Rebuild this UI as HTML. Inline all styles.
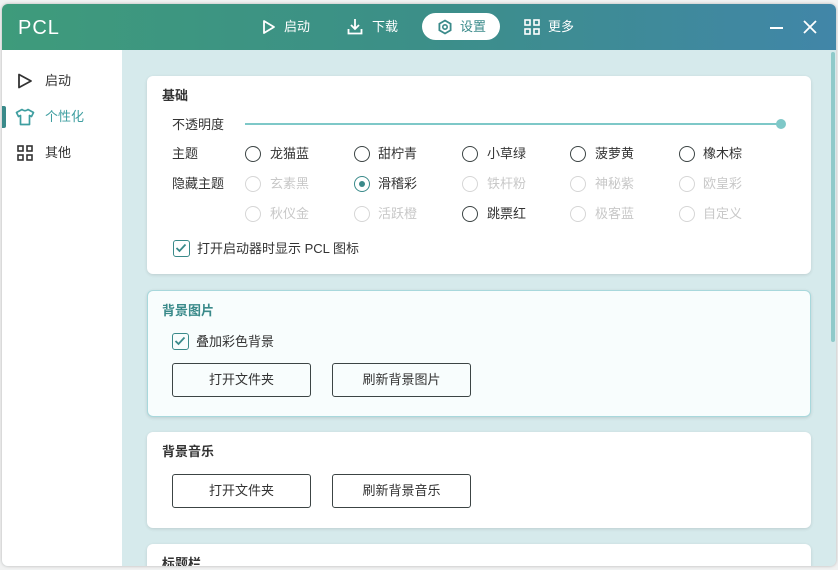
<!DOCTYPE html>
<html><head><meta charset="utf-8"><style>
*{margin:0;padding:0;box-sizing:border-box}
body{width:838px;height:570px;background:#f1f2f2;position:relative;overflow:hidden;font-family:"Liberation Sans","Noto Sans CJK SC",sans-serif;font-size:13px;color:#333}
.win{position:absolute;left:2px;top:4px;width:834px;height:562px;border-radius:6px;overflow:hidden;background:#d6eaec;box-shadow:0 0 3px rgba(0,0,0,.25)}
.hdr{position:absolute;left:0;top:0;width:834px;height:46px;background:linear-gradient(90deg,#3e9b7b,#3c8f88 50%,#4186a8)}
.side{position:absolute;left:0;top:46px;width:120px;height:516px;background:#fff}
.t{position:absolute;white-space:nowrap;line-height:16px}
.card{position:absolute;left:145px;width:664px;background:#fff;border-radius:6px;box-shadow:0 1px 3px rgba(0,0,0,.12)}
.r{position:absolute;width:16px;height:16px;border-radius:50%;border:1.5px solid #3c4444}
.r.d{border-color:#d6d6d6}
.btn{position:absolute;width:139px;height:34px;border:1px solid #3c4444;border-radius:3px;text-align:center;line-height:32px;font-size:13px;color:#333}
.cb{position:absolute;width:17px;height:17px;border:1.5px solid #3a8a8a;border-radius:3px}
</style></head><body>
<div class="win">
<div class="hdr">
<div class="t" style="left:16px;top:13px;font-size:20px;line-height:22px;color:#fff;letter-spacing:1px">PCL</div>
<svg style="position:absolute;left:260px;top:15px" width="14" height="16" viewBox="0 0 14 16"><path d="M2 2 L12 8 L2 14 Z" fill="none" stroke="#fff" stroke-width="1.8" stroke-linejoin="round"/></svg>
<div class="t" style="left:282px;top:15px;color:#fff">启动</div>
<svg style="position:absolute;left:345px;top:14px" width="16" height="17" viewBox="0 0 16 17"><path d="M8 1v10M4 7l4 4 4-4M1.5 11v4.5h13V11" fill="none" stroke="#fff" stroke-width="1.8"/></svg>
<div class="t" style="left:370px;top:15px;color:#fff">下载</div>
<div style="position:absolute;left:420px;top:9px;width:78px;height:27px;border-radius:14px;background:#fff"></div>
<svg style="position:absolute;left:435px;top:15px" width="16" height="16" viewBox="0 0 16 16"><path d="M8 1.5 L13.6 4.75 V11.25 L8 14.5 L2.4 11.25 V4.75 Z" fill="none" stroke="#3a8a8a" stroke-width="1.8"/><circle cx="8" cy="8" r="2.2" fill="none" stroke="#3a8a8a" stroke-width="1.6"/></svg>
<div class="t" style="left:458px;top:15px;color:#3a8a8a">设置</div>
<svg style="position:absolute;left:522px;top:15px" width="16" height="16" viewBox="0 0 16 16"><g fill="none" stroke="#fff" stroke-width="1.6"><rect x="1" y="1" width="5" height="5"/><rect x="10" y="1" width="5" height="5"/><rect x="1" y="10" width="5" height="5"/><rect x="10" y="10" width="5" height="5"/></g></svg>
<div class="t" style="left:546px;top:15px;color:#fff">更多</div>
<div style="position:absolute;left:768px;top:23px;width:13px;height:2px;background:#fff"></div>
<svg style="position:absolute;left:801px;top:16px" width="14" height="14" viewBox="0 0 14 14"><path d="M1 1L13 13M13 1L1 13" stroke="#fff" stroke-width="1.8"/></svg>
</div>
<div class="side">
<svg style="position:absolute;left:15px;top:23px" width="16" height="16" viewBox="0 0 16 16"><path d="M2 1.5 L14 8 L2 14.5 Z" fill="none" stroke="#333" stroke-width="1.8" stroke-linejoin="round"/></svg>
<div class="t" style="left:43px;top:23px">启动</div>
<div style="position:absolute;left:0;top:56px;width:4px;height:22px;background:#3a8a8a;border-radius:0 2px 2px 0"></div>
<svg style="position:absolute;left:13px;top:58px" width="20" height="18" viewBox="0 0 20 18"><path d="M7 1.5 Q10 4 13 1.5 L18.5 4.5 L16.5 8.5 L14.5 7.5 V16.5 H5.5 V7.5 L3.5 8.5 L1.5 4.5 Z" fill="none" stroke="#3e9ea0" stroke-width="1.7" stroke-linejoin="round"/></svg>
<div class="t" style="left:43px;top:59px;color:#3e9ea0">个性化</div>
<svg style="position:absolute;left:15px;top:95px" width="16" height="16" viewBox="0 0 16 16"><g fill="none" stroke="#333" stroke-width="1.6"><rect x="1" y="1" width="5" height="5"/><rect x="10" y="1" width="5" height="5"/><rect x="1" y="10" width="5" height="5"/><rect x="10" y="10" width="5" height="5"/></g></svg>
<div class="t" style="left:43px;top:95px">其他</div>
</div>
<div style="position:absolute;left:827px;top:46px;width:7px;height:516px;background:#d6eaec"></div>
<div style="position:absolute;left:829px;top:48px;width:4px;height:290px;background:#8fcaca;border-radius:2px"></div>

<div class="card" style="top:72px;height:198px">
<div class="t" style="left:15px;top:12px;font-weight:bold">基础</div>
<div class="t" style="left:25px;top:41px">不透明度</div>
<div style="position:absolute;left:98px;top:47px;width:536px;height:2px;background:#7ec8c8"></div>
<div style="position:absolute;left:629px;top:43px;width:10px;height:10px;border-radius:50%;background:#7ec8c8"></div>
<div class="t" style="left:25px;top:70px">主题</div>
<div class="t" style="left:25px;top:100px">隐藏主题</div>
<div class="r" style="left:98px;top:70px"></div><div class="t" style="left:123px;top:70px">龙猫蓝</div>
<div class="r" style="left:207px;top:70px"></div><div class="t" style="left:231px;top:70px">甜柠青</div>
<div class="r" style="left:315px;top:70px"></div><div class="t" style="left:340px;top:70px">小草绿</div>
<div class="r" style="left:423px;top:70px"></div><div class="t" style="left:448px;top:70px">菠萝黄</div>
<div class="r" style="left:532px;top:70px"></div><div class="t" style="left:556px;top:70px">橡木棕</div>
<div class="r d" style="left:98px;top:100px"></div><div class="t" style="left:123px;top:100px;color:#c8c8c8">玄素黑</div>
<div class="r" style="left:207px;top:100px;border-color:#3a8a8a"><div style="position:absolute;left:3.5px;top:3.5px;width:6px;height:6px;border-radius:50%;background:#3a8a8a"></div></div><div class="t" style="left:231px;top:100px">滑稽彩</div>
<div class="r d" style="left:315px;top:100px"></div><div class="t" style="left:340px;top:100px;color:#c8c8c8">铁杆粉</div>
<div class="r d" style="left:423px;top:100px"></div><div class="t" style="left:448px;top:100px;color:#c8c8c8">神秘紫</div>
<div class="r d" style="left:532px;top:100px"></div><div class="t" style="left:556px;top:100px;color:#c8c8c8">欧皇彩</div>
<div class="r d" style="left:98px;top:130px"></div><div class="t" style="left:123px;top:130px;color:#c8c8c8">秋仪金</div>
<div class="r d" style="left:207px;top:130px"></div><div class="t" style="left:231px;top:130px;color:#c8c8c8">活跃橙</div>
<div class="r" style="left:315px;top:130px"></div><div class="t" style="left:340px;top:130px">跳票红</div>
<div class="r d" style="left:423px;top:130px"></div><div class="t" style="left:448px;top:130px;color:#c8c8c8">极客蓝</div>
<div class="r d" style="left:532px;top:130px"></div><div class="t" style="left:556px;top:130px;color:#c8c8c8">自定义</div>
<div class="cb" style="left:26px;top:164px"><svg width="14" height="14" viewBox="0 0 14 14" style="position:absolute;left:0;top:0"><path d="M2.5 7 L5.5 10 L11.5 3.5" fill="none" stroke="#3a8a8a" stroke-width="1.8"/></svg></div>
<div class="t" style="left:50px;top:165px">打开启动器时显示 PCL 图标</div>
</div>

<div class="card" style="top:286px;height:127px;background:#f8fdfd;border:1.5px solid #a8d8dc">
<div class="t" style="left:14px;top:12px;font-weight:bold;color:#3a8a8a">背景图片</div>
<div class="cb" style="left:24px;top:42px"><svg width="14" height="14" viewBox="0 0 14 14" style="position:absolute;left:0;top:0"><path d="M2.5 7 L5.5 10 L11.5 3.5" fill="none" stroke="#3a8a8a" stroke-width="1.8"/></svg></div>
<div class="t" style="left:48px;top:43px">叠加彩色背景</div>
<div class="btn" style="left:24px;top:72px">打开文件夹</div>
<div class="btn" style="left:184px;top:72px">刷新背景图片</div>
</div>

<div class="card" style="top:428px;height:96px">
<div class="t" style="left:15px;top:12px;font-weight:bold">背景音乐</div>
<div class="btn" style="left:25px;top:42px">打开文件夹</div>
<div class="btn" style="left:185px;top:42px">刷新背景音乐</div>
</div>

<div class="card" style="top:540px;height:40px">
<div class="t" style="left:15px;top:12px;font-weight:bold">标题栏</div>
</div>
</div>
</body></html>
